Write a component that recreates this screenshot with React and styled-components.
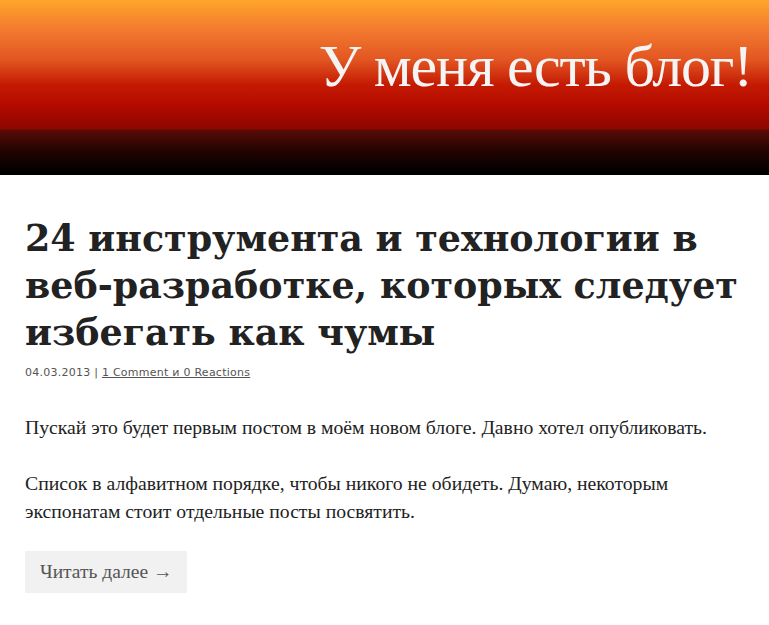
import React from "react";
import styled, { createGlobalStyle } from "styled-components";

const Global = createGlobalStyle`
  html, body { margin: 0; padding: 0; background: #fff; }
  body { font-family: "Liberation Serif", serif; color: #222; }
`;

const Header = styled.header`
  height: 175px;
  display: flex;
  justify-content: flex-end;
  align-items: flex-start;
  padding: 0 17px 0 0;
  box-sizing: border-box;
  background: linear-gradient(
    to bottom,
    #ffa52a 0px,
    #f47c30 28px,
    #e25522 60px,
    #c41a02 85px,
    #b40a00 105px,
    #8c0600 129px,
    #5a0c05 130px,
    #240402 150px,
    #000 172px,
    #000 175px
  );
`;

const SiteTitle = styled.h1`
  margin: 36px 0 0;
  font-family: "Liberation Serif", serif;
  font-weight: normal;
  font-size: 60px;
  line-height: 60px;
  color: #f4f4f4;
  letter-spacing: -1.2px;
`;

const Main = styled.main`
  padding: 40px 25px 0;
`;

const PostTitle = styled.h2`
  margin: 0;
  font-family: "DejaVu Serif", serif;
  font-weight: bold;
  font-size: 36.4px;
  line-height: 47px;
  color: #222;
`;

const Meta = styled.div`
  margin-top: 10px;
  font-family: "DejaVu Sans", Verdana, sans-serif;
  font-size: 11px;
  letter-spacing: 0.25px;
  color: #555;
`;

const MetaLink = styled.a`
  color: #555;
  text-decoration: underline;
`;

const Body = styled.div`
  padding-top: 6px;
`;

const Para = styled.p`
  margin: 28px 0 0;
  font-family: "Liberation Serif", serif;
  font-size: 19.7px;
  line-height: 28px;
  color: #222;
`;

const ReadMore = styled.a`
  display: inline-block;
  margin-top: 26px;
  padding: 0 15px;
  height: 42px;
  line-height: 42px;
  background: #f1f1f1;
  color: #555;
  font-family: "Liberation Serif", serif;
  font-size: 19.5px;
  text-decoration: none;
`;

export default function App() {
  return (
    <>
      <Global />
      <Header>
        <SiteTitle>У меня есть блог!</SiteTitle>
      </Header>
      <Main>
        <PostTitle>24 инструмента и технологии в веб-разработке, которых следует избегать как чумы</PostTitle>
        <Meta>
          04.03.2013 | <MetaLink href="#">1 Comment и 0 Reactions</MetaLink>
        </Meta>
        <Body>
          <Para>Пускай это будет первым постом в моём новом блоге. Давно хотел опубликовать.</Para>
          <Para>Список в алфавитном порядке, чтобы никого не обидеть. Думаю, некоторым экспонатам стоит отдельные посты посвятить.</Para>
          <ReadMore href="#">Читать далее →</ReadMore>
        </Body>
      </Main>
    </>
  );
}
